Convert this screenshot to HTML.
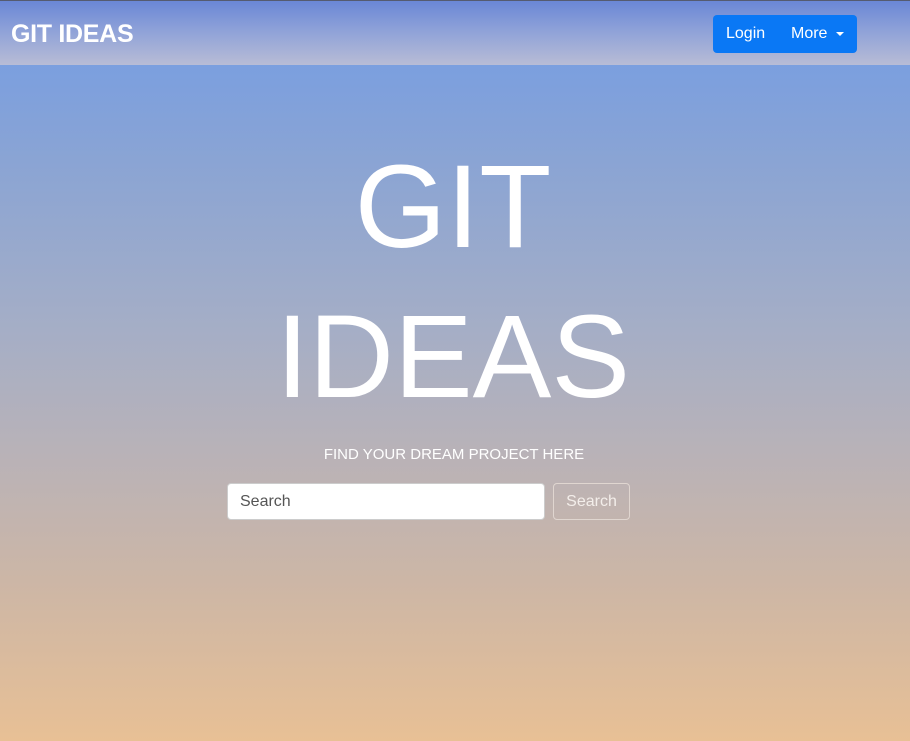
<!DOCTYPE html>
<html><head><style>
*{margin:0;padding:0;box-sizing:border-box}
html,body{width:910px;height:741px;overflow:hidden}
body{font-family:"Liberation Sans",sans-serif;color:#fff;position:relative;
background:linear-gradient(to bottom,#7b9fdf 65px,#8aa4d4 160px,#a5aec6 330px,#b8b2b8 450px,#ccb6a6 580px,#e8c095 741px)}
.nav{position:absolute;top:0;left:0;width:910px;height:65px;border-top:1px solid #555b70;
background:linear-gradient(to bottom,#6a87d6,#8fa2d8 30px,#b8bcd6 64px)}
.brand{position:absolute;left:11px;top:19px;font-size:25px;font-weight:bold;letter-spacing:-0.3px}
.btns{position:absolute;left:713px;top:14px;width:144px;height:38px;background:#0a78f5;border-radius:4px;font-size:16px}
.btns span{position:absolute;top:10px}
.caret{position:absolute;left:123px;top:17px;border-left:4px solid transparent;border-right:4px solid transparent;border-top:4px solid #fff}
.h{position:absolute;width:910px;text-align:center;font-size:118px;line-height:1;left:-2px}
.sub{position:absolute;top:446px;left:0;width:910px;text-align:center;font-size:15px;padding-right:2px}
.in{position:absolute;left:227px;top:483px;width:318px;height:37px;background:#fff;border:1px solid #ccc;border-radius:4px;color:#555;font-size:16px;padding:9px 12px}
.sb{position:absolute;left:553px;top:483px;width:77px;height:37px;border:1px solid #e0d6d0;border-radius:4px;font-size:16px;text-align:center;padding-top:9px;color:#f3eeea}
</style></head><body>
<div class="nav"><div class="brand">GIT IDEAS</div>
<div class="btns"><span style="left:13px">Login</span><span style="left:78px">More</span><div class="caret"></div></div></div>
<div class="h" style="top:148px">GIT</div>
<div class="h" style="top:298px">IDEAS</div>
<div class="sub">FIND YOUR DREAM PROJECT HERE</div>
<div class="in">Search</div>
<div class="sb">Search</div>
</body></html>
